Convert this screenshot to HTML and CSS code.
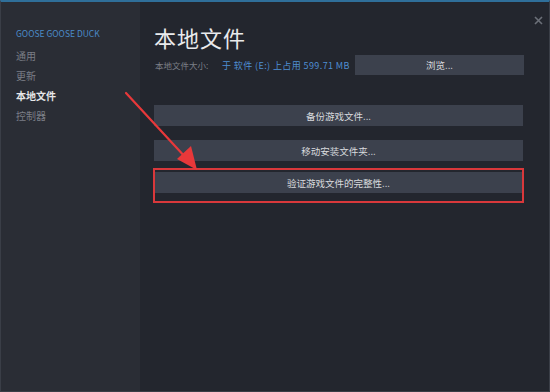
FILE: index.html
```html
<!DOCTYPE html>
<html lang="zh">
<head>
<meta charset="utf-8">
<link rel="stylesheet" href="styles.css">
</head>
<body>
<div class="window">
  <aside class="sidebar">
    <div class="game">GOOSE GOOSE DUCK</div>
    <div class="nav">通用</div>
    <div class="nav">更新</div>
    <div class="nav active">本地文件</div>
    <div class="nav">控制器</div>
  </aside>
  <main class="main">
    <h1 class="title">本地文件</h1>
    <div class="size-row">
      <span class="label">本地文件大小:</span>
      <span class="value">于 软件 (E:) 上占用 599.71 MB</span>
      <div class="btn browse">浏览...</div>
    </div>
    <div class="btn wide first">备份游戏文件...</div>
    <div class="btn wide">移动安装文件夹...</div>
    <div class="highlight"><div class="btn wide inner">验证游戏文件的完整性...</div></div>
  </main>
  <div class="close">
    <svg width="9" height="9" viewBox="0 0 9 9"><path d="M1 1L8 8M8 1L1 8" stroke="#6b6f78" stroke-width="1.6"/></svg>
  </div>
  <svg class="arrow" width="120" height="100" viewBox="0 0 120 100">
    <line x1="5" y1="2" x2="66" y2="68" stroke="#e8383a" stroke-width="2.2" stroke-linecap="round"/>
    <polygon points="76,79 56,68 70,55" fill="#e8383a"/>
  </svg>
</div>
</body>
</html>
```
FILE: styles.css
```css
* { box-sizing: border-box; }
html, body { margin: 0; padding: 0; }
body {
  width: 550px; height: 392px; overflow: hidden;
  background: #23262e;
  font-family: "Noto Sans CJK SC", "Noto Sans", sans-serif;
}
.window {
  position: relative;
  width: 550px; height: 392px;
  display: flex;
  border: 1px solid #3a3e47;
  border-top: 2px solid #2f6f9a;
  background: #23262e;
}
.sidebar {
  width: 139px;
  background: #2a2d35;
  padding: 24px 0 0 15px;
  display: flex; flex-direction: column;
}
.game {
  color: #4b8bc8;
  font-size: 8.5px;
  height: 14px; line-height: 14px;
  margin-bottom: 6px;
}
.nav {
  color: #7a7e86;
  font-size: 10px;
  height: 20px; line-height: 20px;
}
.nav.active { color: #e6e7e9; font-weight: 700; }
.main {
  flex: 1;
  padding: 0 24px 0 14px;
  display: flex; flex-direction: column;
}
.title {
  margin: 19px 0 0 0;
  font-size: 22px; font-weight: 400;
  color: #e9eaec;
  line-height: 32px; height: 32px;
  letter-spacing: 1px;
}
.size-row {
  margin-top: 2px;
  display: flex; align-items: center;
  height: 20px;
}
.label { color: #7b7f87; font-size: 8.5px; width: 68px; padding-left: 1px; }
.value { color: #4f8fd3; font-size: 9px; letter-spacing: 0.4px; width: 133px; white-space: nowrap; }
.btn {
  background: #3c414d;
  color: #d9dbde;
  font-size: 9.5px;
  display: flex; align-items: center; justify-content: center;
  height: 21px;
}
.browse { width: 169px; height: 20px; }
.wide { width: 369px; }
.first { margin-top: 30px; }
.wide + .wide { margin-top: 14px; }
.highlight {
  margin-top: 7px;
  margin-left: -1px;
  width: 371px; height: 35px;
  border: 2px solid #d9383b;
  padding: 2px 0 0 0;
}
.highlight .inner { width: 367px; }
.close { position: absolute; right: 6px; top: 4px; }
.arrow { position: absolute; left: 120px; top: 89px; }
```
